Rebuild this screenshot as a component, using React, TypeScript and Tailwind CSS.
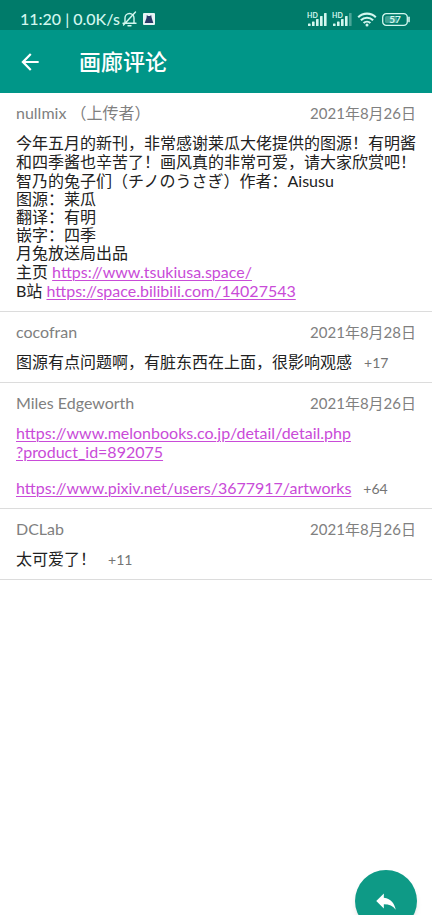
import React from 'react'

const SignalIcon = ({ full = true }: { full?: boolean }) => (
  <svg width="20" height="15" viewBox="0 0 20 15" fill="currentColor" aria-hidden="true">
    <text x="0" y="5.5" fontSize="7" fontWeight="700">HD</text>
    <rect x="1" y="11.5" width="2.6" height="2.5" rx="0.6" />
    <rect x="5" y="9.5" width="2.6" height="4.5" rx="0.6" />
    <rect x="9" y="7" width="2.6" height="7" rx="0.6" />
    <rect x="13" y="4" width="2.6" height="10" rx="0.6" />
    <rect x="17" y="1" width="2.6" height="13" rx="0.6" opacity={full ? 1 : 0.35} />
  </svg>
)

const WifiIcon = () => (
  <svg width="20" height="15" viewBox="0 0 20 15" fill="none" stroke="currentColor" strokeWidth="2.1" aria-hidden="true">
    <path d="M1.2 5.2a12.6 12.6 0 0 1 17.6 0" />
    <path d="M3.9 8.3a8.7 8.7 0 0 1 12.2 0" />
    <path d="M6.6 11.1a4.9 4.9 0 0 1 6.8 0" />
    <circle cx="10" cy="12.9" r="1.5" fill="currentColor" stroke="none" />
  </svg>
)

const BatteryIcon = () => (
  <svg width="29" height="13" viewBox="0 0 29 13" fill="none" aria-hidden="true">
    <rect x="0.7" y="0.7" width="24.6" height="11.6" rx="3.6" stroke="currentColor" strokeWidth="1.3" />
    <rect x="3" y="3" width="12" height="7" rx="1.5" fill="currentColor" opacity="0.3" />
    <path d="M27 4.4v4.2" stroke="currentColor" strokeWidth="1.6" strokeLinecap="round" />
    <text x="13" y="10" fontSize="10" fontWeight="700" textAnchor="middle" fill="currentColor">57</text>
  </svg>
)

const MutedBellIcon = () => (
  <svg width="15" height="16" viewBox="0 0 15 16" fill="none" stroke="currentColor" strokeWidth="1.4" aria-hidden="true">
    <path d="M3 12V7a4.5 4.5 0 0 1 9 0v5" />
    <path d="M1 12.3h13M6 14.7h3M13.5 1 1.5 14" strokeLinecap="round" />
  </svg>
)

const AppBadgeIcon = () => (
  <svg width="12" height="12" viewBox="0 0 12 12" aria-hidden="true">
    <rect width="12" height="12" rx="1" fill="#e8f4f5" />
    <path d="M3.8 2 5 3h2l1.2-1 .5 3L10.3 10H1.7l1.8-5z" fill="#2b3a67" />
  </svg>
)

const StatusBar = () => (
  <div className="flex h-[30px] items-center justify-between bg-[#007b6a] pt-2 pr-[21px] pl-5 text-[#d3f7ef]">
    <div className="flex items-center gap-0.5">
      <span className="text-base leading-5 font-medium">11:20 | 0.0K/s</span>
      <MutedBellIcon />
      <span className="pl-1">
        <AppBadgeIcon />
      </span>
    </div>
    <div className="flex items-center gap-[5px]">
      <SignalIcon />
      <SignalIcon full={false} />
      <WifiIcon />
      <BatteryIcon />
    </div>
  </div>
)

const AppBar = () => (
  <header className="flex h-[63px] items-center gap-9 bg-[#009688] px-[17px] text-white">
    <button type="button" aria-label="返回">
      <svg width="26" height="26" viewBox="0 0 24 24" fill="currentColor" aria-hidden="true">
        <path d="M20 11H7.83l5.59-5.59L12 4l-8 8 8 8 1.41-1.41L7.83 13H20v-2z" />
      </svg>
    </button>
    <h1 className="text-[22px] leading-7 font-medium">画廊评论</h1>
  </header>
)

interface CommentProps {
  author: string
  date: string
  children: React.ReactNode
}

const Comment = ({ author, date, children }: CommentProps) => (
  <li className="border-b border-[#dcdcdc] px-4 pt-[10px] pb-[11px]">
    <div className="flex justify-between leading-5 text-[#808080]">
      <span>{author}</span>
      <time className="text-[15px]">{date}</time>
    </div>
    <div className="mt-[10px] leading-[19px] text-[#212121]">{children}</div>
  </li>
)

const Score = ({ value }: { value: string }) => (
  <span className="ml-3 text-sm leading-none text-[#757575]">{value}</span>
)

const Link = ({ href, children }: { href: string; children: React.ReactNode }) => (
  <a href={href} className="text-[#c94bd8] underline decoration-1 underline-offset-2">
    {children}
  </a>
)

const credits = ['图源：莱瓜', '翻译：有明', '嵌字：四季', '月兔放送局出品']

const App = () => {
  return (
    <div
      lang="zh-CN"
      className="min-h-screen bg-white font-[Lato,'Noto_Sans_CJK_SC',sans-serif] text-base"
    >
      <StatusBar />
      <AppBar />

      <ul>
        <Comment author="nullmix （上传者）" date="2021年8月26日">
          <p>今年五月的新刊，非常感谢莱瓜大佬提供的图源！有明酱和四季酱也辛苦了！画风真的非常可爱，请大家欣赏吧！</p>
          <p>智乃的兔子们（チノのうさぎ）作者：Aisusu</p>
          {credits.map((line) => (
            <p key={line} className="leading-[18px]">{line}</p>
          ))}
          <p>
            主页 <Link href="https://www.tsukiusa.space/">https://www.tsukiusa.space/</Link>
          </p>
          <p>
            B站 <Link href="https://space.bilibili.com/14027543">https://space.bilibili.com/14027543</Link>
          </p>
        </Comment>

        <Comment author="cocofran" date="2021年8月28日">
          <p>
            图源有点问题啊，有脏东西在上面，很影响观感
            <Score value="+17" />
          </p>
        </Comment>

        <Comment author="Miles Edgeworth" date="2021年8月26日">
          <p>
            <Link href="https://www.melonbooks.co.jp/detail/detail.php?product_id=892075">
              https://www.melonbooks.co.jp/detail/detail.php
              <br />
              ?product_id=892075
            </Link>
          </p>
          <p className="mt-[17px]">
            <Link href="https://www.pixiv.net/users/3677917/artworks">
              https://www.pixiv.net/users/3677917/artworks
            </Link>
            <Score value="+64" />
          </p>
        </Comment>

        <Comment author="DCLab" date="2021年8月26日">
          <p>
            太可爱了！
            <Score value="+11" />
          </p>
        </Comment>
      </ul>

      {/* Reply button */}
      <button
        type="button"
        aria-label="回复"
        className="fixed right-[15px] -bottom-[17px] flex size-[62px] items-center justify-center rounded-full bg-[#0e9a86] text-white shadow-md"
      >
        <svg width="26" height="26" viewBox="0 0 24 24" fill="currentColor" aria-hidden="true">
          <path d="M10 9V5l-7 7 7 7v-4.1c5 0 8.5 1.6 11 5.1-1-5-4-10-11-11z" />
        </svg>
      </button>
    </div>
  )
}

export default App
